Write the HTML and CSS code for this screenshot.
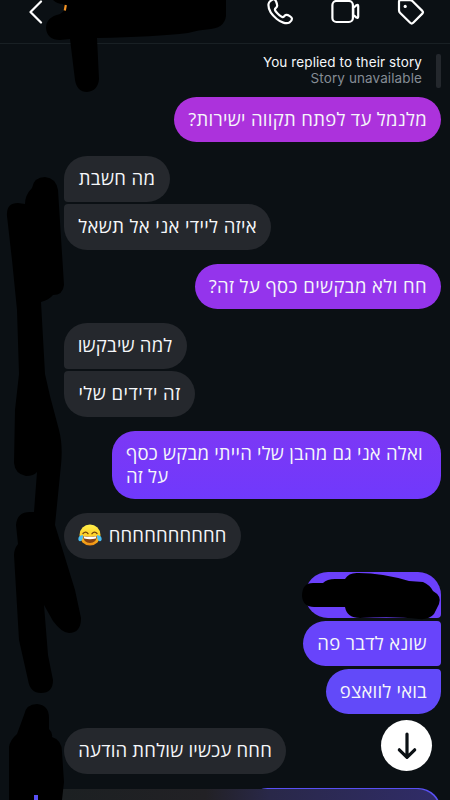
FILE: index.html
```html
<!DOCTYPE html>
<html lang="he">
<head>
<meta charset="utf-8">
<title>Chat</title>
<link rel="stylesheet" href="styles.css">
</head>
<body>
<main class="screen">
  <header class="topbar">
    <svg class="back" width="14" height="24" viewBox="0 0 14 24"><path d="M12 1.5 1.5 12 12 22.5"/></svg>
    <nav class="actions">
      <svg width="27" height="28" viewBox="0 0 27 28"><path d="M6.8 1.1C4.5 2 1.8 3.4 1.5 6.2C1 11.3 5.3 17.2 9.8 21C13.6 24.2 19.2 26.3 22.4 24.5C24.2 23.4 25 22 25 20.8C25 18.9 21 16.7 19.2 16.9C17.1 17.2 17.2 19.3 15.5 19.1C13.4 18.8 7.7 13.1 7.9 11.3C8.1 9.8 10.4 9.8 10.2 7.6C10 5.5 8.6 1.1 6.8 1.1Z"/></svg>
      <svg width="29" height="26" viewBox="0 0 29 26"><rect x="1.4" y="3" width="20.5" height="21" rx="4"/><path d="M22.3 10 25.5 7.2Q27.2 6.2 27.2 8.2V18.6Q27.2 20.6 25.5 19.6L22.3 16.8Z"/></svg>
      <svg width="28" height="28" viewBox="0 0 28 28"><path d="M2 3.5Q2 2.2 3.5 2.2H13Q14.5 2.2 15.6 3.2L25.3 12.9Q26.6 14.3 25.3 15.6L16.2 24.8Q14.7 26.3 13.2 24.8L3.2 15Q2 13.8 2 12.2Z"/><circle class="dot" cx="8.2" cy="8.4" r="1.6"/></svg>
    </nav>
  </header>

  <section class="story">
    <div class="story-text"><p>You replied to their story</p><p class="muted">Story unavailable</p></div>
    <span class="story-bar"></span>
  </section>

  <section class="thread">
    <div class="group mine"><p class="bubble m1" dir="rtl"><span>מלנמל עד לפתח תקווה ישירות?</span></p></div>
    <div class="group theirs">
      <p class="bubble first m2" dir="rtl"><span>מה חשבת</span></p>
      <p class="bubble last m3" dir="rtl"><span>איזה ליידי אני אל תשאל</span></p>
    </div>
    <div class="group mine"><p class="bubble m4" dir="rtl"><span>חח ולא מבקשים כסף על זה?</span></p></div>
    <div class="group theirs">
      <p class="bubble first m5" dir="rtl"><span>למה שיבקשו</span></p>
      <p class="bubble last m6" dir="rtl"><span>זה ידידים שלי</span></p>
    </div>
    <div class="group mine"><p class="bubble double m7" dir="rtl"><span>ואלה אני גם מהבן שלי הייתי מבקש כסף<br>על זה</span></p></div>
    <div class="group theirs">
      <p class="bubble m8" dir="rtl"><span>חחחחחחחחחח</span>
        <svg class="joy" width="24" height="22" viewBox="0 0 24 22">
          <defs><linearGradient id="face" x2="0" y2="1"><stop stop-color="#fff04b"/><stop offset=".55" stop-color="#ffce26"/><stop offset="1" stop-color="#ee8b13"/></linearGradient></defs>
          <circle cx="12" cy="11" r="10.5" fill="url(#face)"/>
          <path d="M5 9.5Q7.8 6.6 10 9.7M14 9.7Q16.5 6.6 19 9.5" fill="none" stroke="#74420d" stroke-width="1.3" stroke-linecap="round"/>
          <path d="M5 12Q12 13.3 19 12Q18.5 19 12 19Q5.5 19 5 12Z" fill="#874312"/>
          <path d="M5.6 12.3Q12 13.4 18.4 12.3L17.8 14.6Q12 15.7 6.2 14.6Z" fill="#fff"/>
          <path d="M5 11Q.3 11.5.3 15.2Q.7 18 2.9 17Q5 16 5 11ZM19 11Q23.7 11.5 23.7 15.2Q23.3 18 21.1 17Q19 16 19 11Z" fill="#48bdf3"/>
        </svg></p>
    </div>
    <div class="group mine">
      <p class="bubble first m9"></p>
      <p class="bubble mid m10" dir="rtl"><span>שונא לדבר פה</span></p>
      <p class="bubble last m11" dir="rtl"><span>בואי לוואצפ</span></p>
    </div>
    <div class="group theirs"><p class="bubble m12" dir="rtl"><span>חחח עכשיו שולחת הודעה</span></p></div>
    <div class="group mine"><p class="bubble m13"></p></div>
  </section>

  <div class="composer"></div>
  <button class="down" aria-label="Scroll down"><svg width="20" height="28" viewBox="0 0 20 28"><path d="M10 2V25M2.3 17.8 10 25.4 17.7 17.8"/></svg></button>

  <svg class="marks" width="450" height="800" viewBox="0 0 450 800">
    <path d="M53 0Q57 4 63 4Q67 10 60 14Q46 17 46 28Q47 40 60 40L70 39L75 80Q77 92 87 92Q98 91 99 79L97 38Q155 37 188 33Q198 30 211 29Q227 27 226 12V0Z"/>
    <path d="M32 188Q34 177 45 177Q56 178 58 190L64 285Q63 295 53 295Q49 300 41 302L45 374L50 396L59 430Q63 445 61 465L55 525L75 590L81 618Q81 633 69 633Q62 633 53 621L44 605L48 655L53 680Q53 693 41 693Q30 693 28 680L19 640L14 555Q14 549 18 544L16 525Q17 512 30 512L34 512L37 472Q34 476 26 476Q15 474 14 463L15 410L19 374L17 310L12 260L7 216Q6 203 18 203L25 204Q25 195 32 188Z"/>
    <path d="M9 800V747Q10 740 17 734L24 715Q26 704 37 704Q49 705 49 718V729Q53 733 52 737Q62 740 62 752L64 782L62 800Z"/>
    <path d="M302 596Q302 583 313 583H323Q327 579 335 579H345Q349 572 359 573Q382 573 409 581L423 582Q430 585 433 591Q442 596 439 604L434 614Q429 620 419 619Q395 616 360 618Q347 618 345 607H314Q303 607 302 596Z"/>
    <path class="orange" d="M65.8 5 64.8 10.5"/><path class="blue" d="M34 795H38V800H34Z"/>
  </svg>
</main>
</body>
</html>
```
FILE: styles.css
```css
* { box-sizing: border-box; }
body { margin: 0; background: #0b1014; }
p { margin: 0; }
.screen { position: relative; width: 450px; height: 800px; overflow: hidden; background: #0b1014; color: #f5f7fa; font-family: "Open Sans", "Noto Sans", "DejaVu Sans", sans-serif; }
.topbar { height: 44px; border-bottom: 1px solid #192024; display: flex; align-items: flex-start; justify-content: space-between; padding: 0 25px 0 29px; }
.topbar svg { fill: none; stroke: #fff; stroke-width: 2.2; stroke-linecap: round; stroke-linejoin: round; display: block; }
.topbar .dot { fill: #fff; stroke: none; }
.actions { display: flex; gap: 37px; margin-top: -2px; }
.story { display: flex; justify-content: flex-end; gap: 14px; height: 52.6px; padding: 10px 9px 0 0; }
.story-text { font: 13.5px/16px Inter, sans-serif; text-align: right; letter-spacing: .1px; }
.muted { color: #858c94; }
.story-bar { width: 5px; height: 34px; border-radius: 2px; background: #24282d; }
.thread { display: flex; flex-direction: column; gap: 13.7px; padding: 0 9px 0 64px; }
.group { display: flex; flex-direction: column; gap: 2.3px; align-items: flex-start; }
.mine { align-items: flex-end; }
.bubble { height: 45.8px; padding: 0 14px 1px; border-radius: 23px; background: #25282d; display: flex; align-items: center; justify-content: space-between; font-size: 18.5px; line-height: 22.8px; white-space: nowrap; }
.double { height: 68.6px; }
.theirs .first { border-bottom-left-radius: 4px; }
.theirs .last { border-top-left-radius: 4px; }
.mine .first { border-bottom-right-radius: 4px; }
.mine .mid { border-top-right-radius: 4px; border-bottom-right-radius: 4px; }
.mine .last { border-top-right-radius: 4px; }
.m1 { width: 267px; background: #ac32dc; letter-spacing: .29px; }
.m2 { width: 105.5px; letter-spacing: .4px; }
.m3 { width: 207px; letter-spacing: .38px; }
.m4 { width: 246px; background: #9434ec; letter-spacing: .4px; }
.m5 { width: 122.5px; letter-spacing: .2px; }
.m6 { width: 130.5px; letter-spacing: .45px; }
.m7 { width: 329px; padding-right: 18px; background: linear-gradient(#7c38f5, #7039fc); letter-spacing: .22px; }
.m7 span { width: 100%; text-align: left; }
.m8 { width: 176.5px; letter-spacing: .15px; }
.m9 { width: 136px; background: #6b40fb; }
.m10 { width: 138px; background: #6844fb; letter-spacing: .3px; }
.m11 { width: 115px; background: #624af9; letter-spacing: .2px; }
.m12 { width: 222px; letter-spacing: .2px; }
.m13 { width: 196px; background: #5950f4; }
.composer { position: absolute; left: 62px; right: 10px; top: 789px; height: 40px; border-radius: 0 23px 0 0; background: linear-gradient(90deg, #1c2022 0, #222125 38%, #292849 55%, #302c68 100%); }
.down { position: absolute; left: 381px; top: 720px; width: 51px; height: 51px; border: 0; padding: 0; border-radius: 50%; background: #fff; display: grid; place-items: center; }
.down svg { fill: none; stroke: #0b1014; stroke-width: 3.2; stroke-linecap: round; stroke-linejoin: round; }
.marks { position: absolute; inset: 0; fill: #000; pointer-events: none; }
.marks .orange { stroke: #f39325; stroke-width: 2.2; }
.marks .blue { fill: #5950f4; }
```
